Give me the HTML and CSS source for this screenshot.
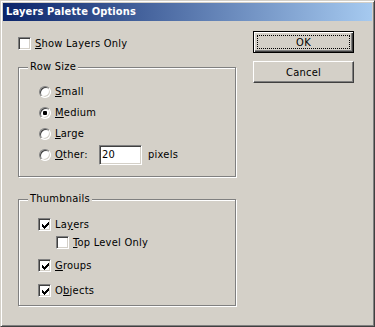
FILE: index.html
```html
<!DOCTYPE html>
<html lang="en">
  <head>
    <meta charset="UTF-8" />
    <title>Layers Palette Options</title>
    <link rel="stylesheet" href="styles.css">
  </head>
  <body>
    <div class="window">
      <div class="titlebar">Layers Palette Options</div>
      <div class="client">
        <div class="left">
          <div class="check-row show-only">
            <span class="checkbox"></span>
            <span class="lbl"><u>S</u>how Layers Only</span>
          </div>

          <div class="group row-size">
            <span class="group-title">Row Size</span>
            <div class="radio-row">
              <span class="radio"></span>
              <span class="lbl"><u>S</u>mall</span>
            </div>
            <div class="radio-row">
              <span class="radio checked"></span>
              <span class="lbl"><u>M</u>edium</span>
            </div>
            <div class="radio-row">
              <span class="radio"></span>
              <span class="lbl"><u>L</u>arge</span>
            </div>
            <div class="radio-row">
              <span class="radio"></span>
              <span class="lbl other"><u>O</u>ther:</span>
              <span class="textbox">20</span>
              <span class="lbl unit">pixels</span>
            </div>
          </div>

          <div class="group thumbs">
            <span class="group-title">Thumbnails</span>
            <div class="check-row t-layers">
              <span class="checkbox checked"><svg width="7" height="7" viewBox="0 0 7 7"><path d="M0 2h1v3h-1zM1 3h1v3h-1zM2 4h1v3h-1zM3 3h1v3h-1zM4 2h1v3h-1zM5 1h1v3h-1zM6 0h1v3h-1z"/></svg></span>
              <span class="lbl">La<u>y</u>ers</span>
            </div>
            <div class="check-row t-top">
              <span class="checkbox"></span>
              <span class="lbl"><u>T</u>op Level Only</span>
            </div>
            <div class="check-row t-groups">
              <span class="checkbox checked"><svg width="7" height="7" viewBox="0 0 7 7"><path d="M0 2h1v3h-1zM1 3h1v3h-1zM2 4h1v3h-1zM3 3h1v3h-1zM4 2h1v3h-1zM5 1h1v3h-1zM6 0h1v3h-1z"/></svg></span>
              <span class="lbl"><u>G</u>roups</span>
            </div>
            <div class="check-row t-objects">
              <span class="checkbox checked"><svg width="7" height="7" viewBox="0 0 7 7"><path d="M0 2h1v3h-1zM1 3h1v3h-1zM2 4h1v3h-1zM3 3h1v3h-1zM4 2h1v3h-1zM5 1h1v3h-1zM6 0h1v3h-1z"/></svg></span>
              <span class="lbl">O<u>b</u>jects</span>
            </div>
          </div>
        </div>

        <div class="buttons">
          <div class="btn default"><span class="focus">OK</span></div>
          <div class="btn">Cancel</div>
        </div>
      </div>
    </div>
  </body>
</html>
```

FILE: styles.css
```css
* {
  margin: 0;
  padding: 0;
  box-sizing: border-box;
}

body {
  background: #d4d0c8;
  font-family: "DejaVu Sans", "Liberation Sans", sans-serif;
  font-stretch: condensed;
  font-size: 11px;
  letter-spacing: 0.25px;
  color: #000;
}

u {
  text-decoration: underline;
  text-underline-offset: 1px;
}

.window {
  width: 375px;
  height: 327px;
  padding: 2px;
  background: #d4d0c8;
  border: 1px solid;
  border-color: #d4d0c8 #404040 #404040 #d4d0c8;
  box-shadow: inset 1px 1px #fff, inset -1px -1px #808080;
}

.titlebar {
  height: 18px;
  line-height: 18px;
  padding-left: 3px;
  background: linear-gradient(to right, #0a246a, #a6caf0);
  color: #fff;
  font-weight: bold;
  font-size: 11px;
  letter-spacing: 0.15px;
}

.client {
  display: flex;
  padding-left: 15px;
}

.left {
  width: 218px;
}

/* checkboxes */
.check-row {
  display: flex;
  align-items: center;
  height: 13px;
  line-height: 13px;
}

.checkbox {
  width: 13px;
  height: 13px;
  flex: none;
  background: #fff;
  border: 1px solid;
  border-color: #808080 #fff #fff #808080;
  box-shadow: inset 1px 1px #404040, inset -1px -1px #d4d0c8;
  display: flex;
  align-items: center;
  justify-content: center;
  margin-right: 4px;
}

.checkbox svg {
  display: block;
  margin: 1px 0 0 1px;
}

.show-only {
  margin-top: 16px;
}

/* group boxes */
.group {
  position: relative;
  border: 1px solid #808080;
  box-shadow: inset 1px 1px #fff, 1px 1px #fff;
}

.group-title {
  position: absolute;
  top: -8px;
  left: 9px;
  padding: 0 2px;
  line-height: 13px;
  background: #d4d0c8;
}

.row-size {
  margin-top: 17px;
  height: 110px;
  padding: 13px 0 0 20px;
}

.radio-row {
  display: flex;
  align-items: center;
  height: 21px;
}

.radio {
  width: 12px;
  height: 12px;
  flex: none;
  border-radius: 50%;
  background: #fff;
  border: 1px solid;
  border-color: #808080 #fff #fff #808080;
  box-shadow: inset 1px 1px #404040, inset -1px -1px #d4d0c8;
  margin-right: 4px;
  display: flex;
  align-items: center;
  justify-content: center;
}

.radio.checked::after {
  content: "";
  width: 4px;
  height: 4px;
  border-radius: 1px;
  background: #000;
}

.lbl.other {
  width: 44px;
}

.textbox {
  width: 43px;
  height: 20px;
  line-height: 18px;
  padding-left: 2px;
  background: #fff;
  border: 1px solid;
  border-color: #808080 #fff #fff #808080;
  box-shadow: inset 1px 1px #404040, inset -1px -1px #d4d0c8;
}

.lbl.unit {
  margin-left: 6px;
}

.thumbs {
  margin-top: 22px;
  height: 107px;
  padding: 18px 0 0 19px;
}

.t-top {
  margin: 5px 0 0 18px;
}

.t-groups {
  margin-top: 10px;
}

.t-objects {
  margin-top: 12px;
}

/* buttons */
.buttons {
  margin-left: 17px;
  width: 101px;
}

.btn {
  height: 22px;
  display: flex;
  align-items: center;
  justify-content: center;
  background: #d4d0c8;
  border: 1px solid;
  border-color: #fff #404040 #404040 #fff;
  box-shadow: inset -1px -1px #808080;
  margin-top: 8px;
}

.btn.default {
  margin-top: 10px;
  border: 1px solid #000;
  box-shadow: inset 1px 1px #fff, inset -1px -1px #404040, inset -2px -2px #808080;
  padding: 3px;
}

.focus {
  width: 100%;
  height: 100%;
  border: 1px dotted #000;
  display: flex;
  align-items: center;
  justify-content: center;
}
```
